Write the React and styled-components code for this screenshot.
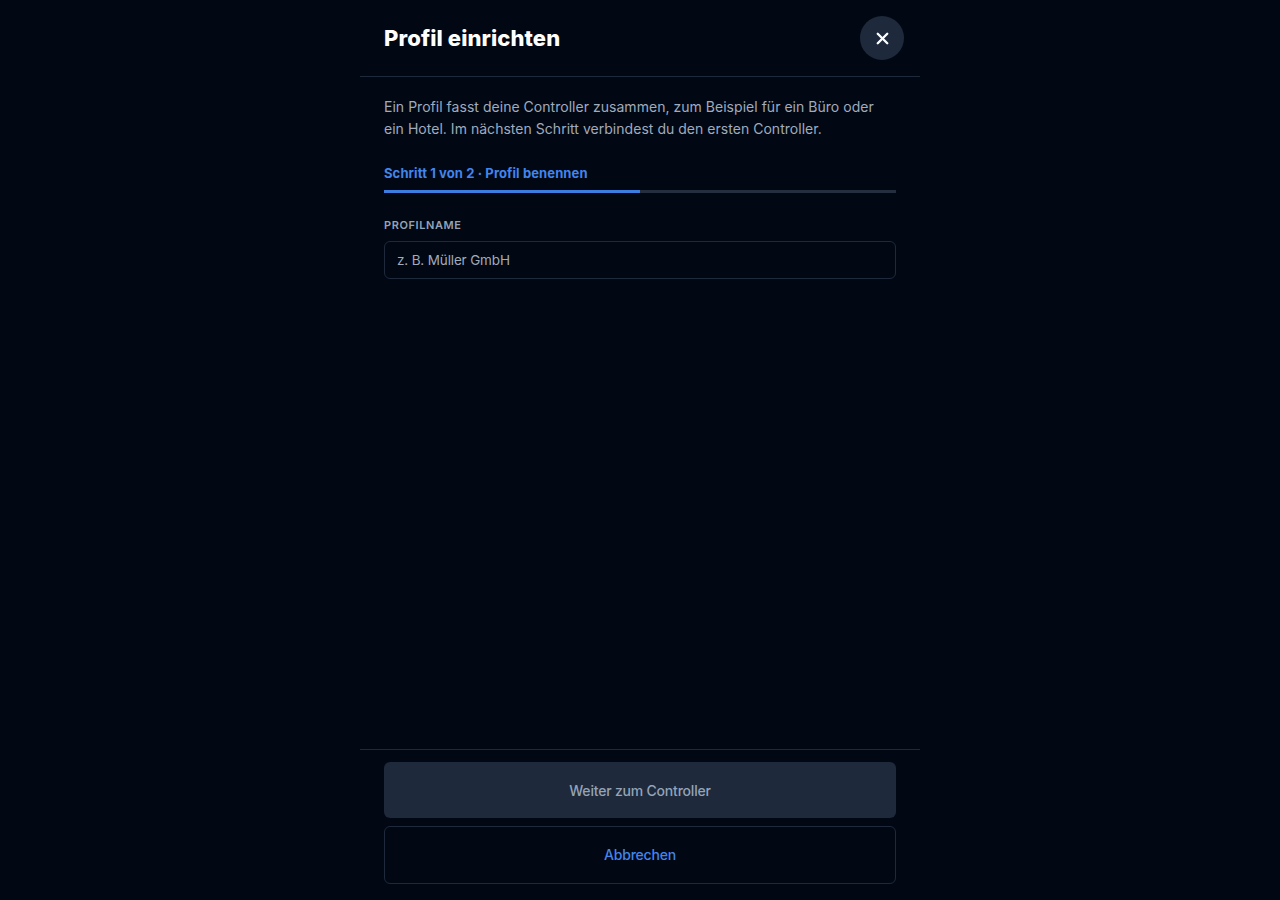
import React from 'react';
import styled, { createGlobalStyle } from 'styled-components';
import { X } from 'lucide-react';

const GlobalStyle = createGlobalStyle`
  * {
    box-sizing: border-box;
  }
  body {
    margin: 0;
    background: #010814;
    font-family: Inter, "Noto Sans", sans-serif;
  }
`;

const Page = styled.div`
  height: 900px;
  display: flex;
  justify-content: center;
  background: #010814;
`;

const Panel = styled.section`
  width: 560px;
  display: flex;
  flex-direction: column;
`;

const Header = styled.header`
  height: 77px;
  padding: 16px 16px 16px 24px;
  display: flex;
  align-items: flex-start;
  justify-content: space-between;
  border-bottom: 1px solid #1e293b;
`;

const Title = styled.h1`
  margin: 0;
  font-size: 22px;
  line-height: 44px;
  font-weight: 800;
  color: #ffffff;
  letter-spacing: 0.1px;
`;

const CloseButton = styled.button`
  width: 44px;
  height: 44px;
  padding: 0;
  border: none;
  border-radius: 50%;
  background: #1e293b;
  color: #ffffff;
  display: flex;
  align-items: center;
  justify-content: center;
`;

const Body = styled.div`
  flex: 1;
  padding: 19px 24px 0;
`;

const Intro = styled.p`
  margin: 0;
  font-size: 14px;
  line-height: 22px;
  color: #a0abbd;
  letter-spacing: 0.03px;
`;

const StepLabel = styled.div`
  margin-top: 24px;
  font-size: 13px;
  line-height: 18px;
  font-weight: 700;
  letter-spacing: 0.11px;
  color: #4285ec;
`;

const Track = styled.div`
  margin-top: 8px;
  height: 3px;
  background: #242e3e;
`;

const Fill = styled.div`
  height: 100%;
  background: #3b7de0;
`;

const FieldLabel = styled.label`
  display: block;
  margin-top: 24px;
  font-size: 11px;
  line-height: 16px;
  font-weight: 600;
  letter-spacing: 0.6px;
  color: #94a3b8;
`;

const Input = styled.input`
  display: block;
  width: 100%;
  height: 38px;
  margin-top: 8px;
  padding: 0 12px;
  background: transparent;
  border: 1px solid #1e293b;
  border-radius: 6px;
  font: inherit;
  font-size: 13.5px;
  letter-spacing: -0.15px;
  color: #ffffff;
  &::placeholder {
    color: #a0abbd;
    opacity: 1;
  }
`;

const Footer = styled.footer`
  padding: 12px 24px 16px;
  display: flex;
  flex-direction: column;
  gap: 8px;
  border-top: 1px solid #1e293b;
`;

const ActionButton = styled.button`
  width: 100%;
  height: ${(p) => (p.$outline ? '58px' : '56px')};
  padding: ${(p) => (p.$outline ? '0 0 2px' : '0')};
  border-radius: 6px;
  border: ${(p) => (p.$outline ? '1px solid #1e293b' : 'none')};
  background: ${(p) => (p.$outline ? 'transparent' : '#1e293b')};
  color: ${(p) => (p.$outline ? '#4285ec' : '#94a3b8')};
  font: inherit;
  font-size: 14px;
  font-weight: 500;
  letter-spacing: -0.2px;
`;

const App = () => {
  const step = 1;
  const total = 2;

  return (
    <Page>
      <GlobalStyle />
      <Panel>
        <Header>
          <Title>Profil einrichten</Title>
          <CloseButton aria-label="Schließen">
            <X size={19} strokeWidth={3} />
          </CloseButton>
        </Header>
        <Body>
          <Intro>
            Ein Profil fasst deine Controller zusammen, zum Beispiel für ein Büro oder
            <br />
            ein Hotel. Im nächsten Schritt verbindest du den ersten Controller.
          </Intro>
          <StepLabel>Schritt 1 von 2 · Profil benennen</StepLabel>
          <Track>
            <Fill style={{ width: `${(step / total) * 100}%` }} />
          </Track>
          <FieldLabel htmlFor="profilname">PROFILNAME</FieldLabel>
          <Input id="profilname" placeholder="z. B. Müller GmbH" />
        </Body>
        <Footer>
          <ActionButton>Weiter zum Controller</ActionButton>
          <ActionButton $outline>Abbrechen</ActionButton>
        </Footer>
      </Panel>
    </Page>
  );
};

export default App;
